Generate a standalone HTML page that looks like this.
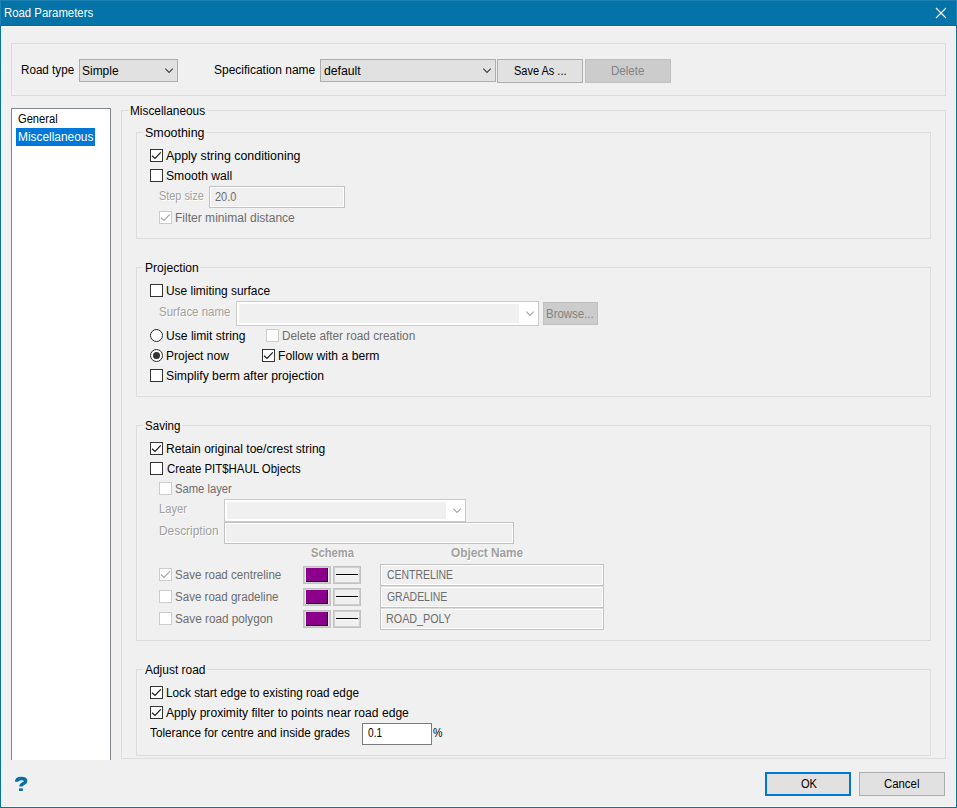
<!DOCTYPE html>
<html><head><meta charset="utf-8"><title>Road Parameters</title>
<style>
html,body{margin:0;padding:0;background:#f0f0f0;width:957px;height:808px;overflow:hidden}
body{position:relative;font-family:"Liberation Sans",sans-serif;font-size:12px}
div,span,svg{position:absolute;display:block}
span{white-space:pre;line-height:14px;transform-origin:0 0}
</style></head><body>
<div style="left:0px;top:0px;width:957px;height:808px;background:#0473a7"></div>
<div style="left:1px;top:26px;width:955px;height:781px;background:#fcf8f4"></div>
<div style="left:2px;top:27px;width:953px;height:779px;background:#f0f0f0"></div>
<div style="left:0px;top:25px;width:957px;height:1px;background:#0069a0"></div>
<div style="left:0px;top:0px;width:957px;height:1px;background:#1e81b3"></div>
<div style="left:0px;top:0px;width:1px;height:25px;background:#1e81b3"></div>
<div style="left:956px;top:0px;width:1px;height:25px;background:#1e81b3"></div>
<svg style="left:935px;top:7px" width="12" height="12" viewBox="0 0 12 12"><path d="M1 1L11 11M11 1L1 11" stroke="#fff" stroke-width="1.1" fill="none"/></svg>
<div style="left:11px;top:43px;width:935px;height:53px;border:1px solid #dcdcdc;box-sizing:border-box"></div>
<div style="left:11px;top:108px;width:100px;height:652px;background:#fff;border:1px solid #828790;border-bottom:none;box-sizing:border-box"></div>
<div style="left:16px;top:128px;width:79px;height:18px;background:#0078d7"></div>
<div style="left:121px;top:110px;width:825px;height:649px;border:1px solid #dcdcdc;box-sizing:border-box"></div>
<div style="left:128px;top:109px;width:78.5px;height:3px;background:#f0f0f0"></div>
<div style="left:136px;top:132px;width:795px;height:107px;border:1px solid #dcdcdc;box-sizing:border-box"></div>
<div style="left:143px;top:131px;width:62.5px;height:3px;background:#f0f0f0"></div>
<div style="left:136px;top:267px;width:795px;height:130px;border:1px solid #dcdcdc;box-sizing:border-box"></div>
<div style="left:143px;top:266px;width:56.5px;height:3px;background:#f0f0f0"></div>
<div style="left:136px;top:425px;width:795px;height:216px;border:1px solid #dcdcdc;box-sizing:border-box"></div>
<div style="left:143px;top:424px;width:38.5px;height:3px;background:#f0f0f0"></div>
<div style="left:136px;top:669px;width:795px;height:87px;border:1px solid #dcdcdc;box-sizing:border-box"></div>
<div style="left:143px;top:668px;width:63.5px;height:3px;background:#f0f0f0"></div>
<div style="left:79px;top:59px;width:99px;height:23px;background:#e1e1e1;border:1px solid #adadad;box-sizing:border-box"></div>
<svg style="left:164px;top:68.25px" width="10" height="6" viewBox="0 0 10 6"><path d="M1.3 0.6L5.05 4.5L8.8 0.6" stroke="#404040" stroke-width="1.12" fill="none"/></svg>
<div style="left:320px;top:59px;width:176px;height:23px;background:#e1e1e1;border:1px solid #adadad;box-sizing:border-box"></div>
<svg style="left:482px;top:68.25px" width="10" height="6" viewBox="0 0 10 6"><path d="M1.3 0.6L5.05 4.5L8.8 0.6" stroke="#404040" stroke-width="1.12" fill="none"/></svg>
<div style="left:497px;top:59px;width:86px;height:24px;background:#e1e1e1;border:1px solid #adadad;box-sizing:border-box"></div>
<div style="left:585px;top:59px;width:86px;height:24px;background:#cccccc;border:1px solid #bfbfbf;box-sizing:border-box"></div>
<div style="left:150px;top:149px;width:13px;height:13px;background:#fff;border:1px solid #333333;box-sizing:border-box"></div>
<svg style="left:150px;top:149px" width="13" height="13" viewBox="0 0 13 13"><path d="M2.0 6.7L5.0 9.4L10.8 3.3" stroke="#1a1a1a" stroke-width="1.2" fill="none"/></svg>
<div style="left:150px;top:169px;width:13px;height:13px;background:#fff;border:1px solid #333333;box-sizing:border-box"></div>
<div style="left:209px;top:186px;width:136px;height:22px;background:#f0f0f0;border:1px solid #c2c2c2;box-shadow:inset 0 0 0 1px #fff;box-sizing:border-box"></div>
<div style="left:159px;top:211px;width:13px;height:13px;background:#fff;border:1px solid #cccccc;box-sizing:border-box"></div>
<svg style="left:159px;top:211px" width="13" height="13" viewBox="0 0 13 13"><path d="M2.0 6.7L5.0 9.4L10.8 3.3" stroke="#a8a8a8" stroke-width="1.2" fill="none"/></svg>
<div style="left:150px;top:284px;width:13px;height:13px;background:#fff;border:1px solid #333333;box-sizing:border-box"></div>
<div style="left:236px;top:301px;width:303px;height:25px;background:#fff;border:1px solid #cacaca;box-sizing:border-box"></div>
<div style="left:239px;top:304px;width:280px;height:19px;background:#f0f0f0"></div>
<svg style="left:525px;top:311.25px" width="10" height="6" viewBox="0 0 10 6"><path d="M1.3 0.6L5.05 4.5L8.8 0.6" stroke="#a6a6a6" stroke-width="1.1" fill="none"/></svg>
<div style="left:543px;top:302px;width:55px;height:23px;background:#cccccc;border:1px solid #bfbfbf;box-sizing:border-box"></div>
<div style="left:150px;top:329px;width:13px;height:13px;background:#fff;border:1px solid #2a2a2a;border-radius:50%;box-sizing:border-box"></div>
<div style="left:266px;top:329px;width:13px;height:13px;background:#fff;border:1px solid #cccccc;box-sizing:border-box"></div>
<div style="left:150px;top:349px;width:13px;height:13px;background:#fff;border:1px solid #2a2a2a;border-radius:50%;box-sizing:border-box"></div>
<div style="left:153px;top:352px;width:7px;height:7px;background:#333;border-radius:50%"></div>
<div style="left:262px;top:349px;width:13px;height:13px;background:#fff;border:1px solid #333333;box-sizing:border-box"></div>
<svg style="left:262px;top:349px" width="13" height="13" viewBox="0 0 13 13"><path d="M2.0 6.7L5.0 9.4L10.8 3.3" stroke="#1a1a1a" stroke-width="1.2" fill="none"/></svg>
<div style="left:150px;top:369px;width:13px;height:13px;background:#fff;border:1px solid #333333;box-sizing:border-box"></div>
<div style="left:150px;top:442px;width:13px;height:13px;background:#fff;border:1px solid #333333;box-sizing:border-box"></div>
<svg style="left:150px;top:442px" width="13" height="13" viewBox="0 0 13 13"><path d="M2.0 6.7L5.0 9.4L10.8 3.3" stroke="#1a1a1a" stroke-width="1.2" fill="none"/></svg>
<div style="left:150px;top:462px;width:13px;height:13px;background:#fff;border:1px solid #333333;box-sizing:border-box"></div>
<div style="left:159px;top:482px;width:13px;height:13px;background:#fff;border:1px solid #cccccc;box-sizing:border-box"></div>
<div style="left:224px;top:499px;width:242px;height:23px;background:#fff;border:1px solid #cacaca;box-sizing:border-box"></div>
<div style="left:227px;top:502px;width:219px;height:17px;background:#f0f0f0"></div>
<svg style="left:452px;top:508.25px" width="10" height="6" viewBox="0 0 10 6"><path d="M1.3 0.6L5.05 4.5L8.8 0.6" stroke="#a6a6a6" stroke-width="1.1" fill="none"/></svg>
<div style="left:224px;top:522px;width:290px;height:22px;background:#f0f0f0;border:1px solid #c2c2c2;box-shadow:inset 0 0 0 1px #fff;box-sizing:border-box"></div>
<div style="left:159px;top:568px;width:13px;height:13px;background:#fff;border:1px solid #cccccc;box-sizing:border-box"></div>
<svg style="left:159px;top:568px" width="13" height="13" viewBox="0 0 13 13"><path d="M2.0 6.7L5.0 9.4L10.8 3.3" stroke="#a8a8a8" stroke-width="1.2" fill="none"/></svg>
<div style="left:303px;top:566px;width:28px;height:18px;background:#f0f0f0;border:1px solid #c2c2c2;box-shadow:inset 0 0 0 1px #cecece;box-sizing:border-box"></div>
<div style="left:306px;top:568px;width:22px;height:14px;background:#8b008b;border-right:1px solid #000;border-bottom:1px solid #000;box-sizing:border-box"></div>
<div style="left:333px;top:566px;width:28px;height:18px;background:#f0f0f0;border:1px solid #c2c2c2;box-shadow:inset 0 0 0 1px #cecece;box-sizing:border-box"></div>
<div style="left:336px;top:574px;width:22px;height:1px;background:#000"></div>
<div style="left:336px;top:575px;width:22px;height:1px;background:#fafafa"></div>
<div style="left:380px;top:564px;width:224px;height:22px;background:#f0f0f0;border:1px solid #c2c2c2;box-shadow:inset 0 0 0 1px #fff;box-sizing:border-box"></div>
<div style="left:159px;top:590px;width:13px;height:13px;background:#fff;border:1px solid #cccccc;box-sizing:border-box"></div>
<div style="left:303px;top:588px;width:28px;height:18px;background:#f0f0f0;border:1px solid #c2c2c2;box-shadow:inset 0 0 0 1px #cecece;box-sizing:border-box"></div>
<div style="left:306px;top:590px;width:22px;height:14px;background:#8b008b;border-right:1px solid #000;border-bottom:1px solid #000;box-sizing:border-box"></div>
<div style="left:333px;top:588px;width:28px;height:18px;background:#f0f0f0;border:1px solid #c2c2c2;box-shadow:inset 0 0 0 1px #cecece;box-sizing:border-box"></div>
<div style="left:336px;top:596px;width:22px;height:1px;background:#000"></div>
<div style="left:336px;top:597px;width:22px;height:1px;background:#fafafa"></div>
<div style="left:380px;top:586px;width:224px;height:22px;background:#f0f0f0;border:1px solid #c2c2c2;border-top-color:#dcdcdc;box-shadow:inset 0 0 0 1px #fff;box-sizing:border-box"></div>
<div style="left:159px;top:612px;width:13px;height:13px;background:#fff;border:1px solid #cccccc;box-sizing:border-box"></div>
<div style="left:303px;top:610px;width:28px;height:18px;background:#f0f0f0;border:1px solid #c2c2c2;box-shadow:inset 0 0 0 1px #cecece;box-sizing:border-box"></div>
<div style="left:306px;top:612px;width:22px;height:14px;background:#8b008b;border-right:1px solid #000;border-bottom:1px solid #000;box-sizing:border-box"></div>
<div style="left:333px;top:610px;width:28px;height:18px;background:#f0f0f0;border:1px solid #c2c2c2;box-shadow:inset 0 0 0 1px #cecece;box-sizing:border-box"></div>
<div style="left:336px;top:618px;width:22px;height:1px;background:#000"></div>
<div style="left:336px;top:619px;width:22px;height:1px;background:#fafafa"></div>
<div style="left:380px;top:608px;width:224px;height:22px;background:#f0f0f0;border:1px solid #c2c2c2;border-top-color:#dcdcdc;box-shadow:inset 0 0 0 1px #fff;box-sizing:border-box"></div>
<div style="left:150px;top:686px;width:13px;height:13px;background:#fff;border:1px solid #333333;box-sizing:border-box"></div>
<svg style="left:150px;top:686px" width="13" height="13" viewBox="0 0 13 13"><path d="M2.0 6.7L5.0 9.4L10.8 3.3" stroke="#1a1a1a" stroke-width="1.2" fill="none"/></svg>
<div style="left:150px;top:706px;width:13px;height:13px;background:#fff;border:1px solid #333333;box-sizing:border-box"></div>
<svg style="left:150px;top:706px" width="13" height="13" viewBox="0 0 13 13"><path d="M2.0 6.7L5.0 9.4L10.8 3.3" stroke="#1a1a1a" stroke-width="1.2" fill="none"/></svg>
<div style="left:362px;top:723px;width:70px;height:22px;background:#fff;border:1px solid #7a7a7a;box-sizing:border-box"></div>
<div style="left:765px;top:772px;width:86px;height:24px;background:#e1e1e1;border:2px solid #0078d7;box-sizing:border-box"></div>
<div style="left:859px;top:772px;width:86px;height:24px;background:#e1e1e1;border:1px solid #adadad;box-sizing:border-box"></div>
<svg style="left:14px;top:776px" width="15" height="16" viewBox="-0.9 -0.9 15 16"><path d="M1.7 4.9C1.8 2.5 3.9 1.6 6.2 1.6C9 1.6 10.8 2.6 10.8 4.3C10.8 6.5 6 6.6 6 9.5" stroke="#0a6ea5" stroke-width="3.4" fill="none"/><rect x="4.1" y="11.5" width="3.9" height="2.6" fill="#0a6ea5"/></svg>
<span style="left:3.90px;top:6px;color:#ffffff;font-weight:400;font-size:12px;transform:scaleX(0.9479)">Road Parameters</span>
<span style="left:20.57px;top:63px;color:#000000;font-weight:400;font-size:12px;transform:scaleX(0.9708)">Road type</span>
<span style="left:82.42px;top:64px;color:#000000;font-weight:400;font-size:12px;transform:scaleX(0.9960)">Simple</span>
<span style="left:213.72px;top:63px;color:#000000;font-weight:400;font-size:12px;transform:scaleX(0.9985)">Specification name</span>
<span style="left:324.41px;top:64px;color:#000000;font-weight:400;font-size:12px;transform:scaleX(1.0188)">default</span>
<span style="left:513.61px;top:64px;color:#000000;font-weight:400;font-size:12px;transform:scaleX(0.9157)">Save As ...</span>
<span style="left:610.68px;top:64px;color:#838383;font-weight:400;font-size:12px;transform:scaleX(0.9623)">Delete</span>
<span style="left:18.39px;top:112px;color:#000000;font-weight:400;font-size:12px;transform:scaleX(0.9290)">General</span>
<span style="left:17.65px;top:130px;color:#ffffff;font-weight:400;font-size:12px;transform:scaleX(0.9916)">Miscellaneous</span>
<span style="left:129.75px;top:104px;color:#000000;font-weight:400;font-size:12px;transform:scaleX(0.9876)">Miscellaneous</span>
<span style="left:144.68px;top:126px;color:#000000;font-weight:400;font-size:12px;transform:scaleX(1.0367)">Smoothing</span>
<span style="left:166.33px;top:149px;color:#000000;font-weight:400;font-size:12px;transform:scaleX(1.0335)">Apply string conditioning</span>
<span style="left:165.91px;top:169px;color:#000000;font-weight:400;font-size:12px;transform:scaleX(1.0134)">Smooth wall</span>
<span style="left:158.72px;top:189px;text-shadow:1px 1px 0 #fff;color:#a0a0a0;font-weight:400;font-size:12px;transform:scaleX(0.9070)">Step size</span>
<span style="left:214.80px;top:190px;color:#6d6d6d;font-weight:400;font-size:12px;transform:scaleX(0.9174)">20.0</span>
<span style="left:175.44px;top:211px;color:#6d6d6d;font-weight:400;font-size:12px;transform:scaleX(1.0036)">Filter minimal distance</span>
<span style="left:144.73px;top:261px;color:#000000;font-weight:400;font-size:12px;transform:scaleX(1.0082)">Projection</span>
<span style="left:165.81px;top:284px;color:#000000;font-weight:400;font-size:12px;transform:scaleX(0.9940)">Use limiting surface</span>
<span style="left:158.87px;top:305px;text-shadow:1px 1px 0 #fff;color:#a0a0a0;font-weight:400;font-size:12px;transform:scaleX(0.9545)">Surface name</span>
<span style="left:546.49px;top:307px;color:#838383;font-weight:400;font-size:12px;transform:scaleX(0.9531)">Browse...</span>
<span style="left:165.79px;top:329px;color:#000000;font-weight:400;font-size:12px;transform:scaleX(1.0089)">Use limit string</span>
<span style="left:281.76px;top:329px;color:#6d6d6d;font-weight:400;font-size:12px;transform:scaleX(0.9837)">Delete after road creation</span>
<span style="left:165.84px;top:349px;color:#000000;font-weight:400;font-size:12px;transform:scaleX(1.0024)">Project now</span>
<span style="left:277.63px;top:349px;color:#000000;font-weight:400;font-size:12px;transform:scaleX(1.0132)">Follow with a berm</span>
<span style="left:165.80px;top:369px;color:#000000;font-weight:400;font-size:12px;transform:scaleX(1.0172)">Simplify berm after projection</span>
<span style="left:144.76px;top:419px;color:#000000;font-weight:400;font-size:12px;transform:scaleX(0.9645)">Saving</span>
<span style="left:165.84px;top:442px;color:#000000;font-weight:400;font-size:12px;transform:scaleX(1.0035)">Retain original toe/crest string</span>
<span style="left:166.59px;top:462px;color:#000000;font-weight:400;font-size:12px;transform:scaleX(0.9524)">Create PIT$HAUL Objects</span>
<span style="left:174.79px;top:482px;color:#6d6d6d;font-weight:400;font-size:12px;transform:scaleX(0.9343)">Same layer</span>
<span style="left:158.91px;top:502px;text-shadow:1px 1px 0 #fff;color:#a0a0a0;font-weight:400;font-size:12px;transform:scaleX(0.9334)">Layer</span>
<span style="left:158.85px;top:524px;text-shadow:1px 1px 0 #fff;color:#a0a0a0;font-weight:400;font-size:12px;transform:scaleX(0.9918)">Description</span>
<span style="left:310.56px;top:546px;text-shadow:1px 1px 0 #fff;color:#a0a0a0;font-weight:700;font-size:12px;transform:scaleX(0.9365)">Schema</span>
<span style="left:450.64px;top:546px;text-shadow:1px 1px 0 #fff;color:#a0a0a0;font-weight:700;font-size:12px;transform:scaleX(0.9838)">Object Name</span>
<span style="left:174.76px;top:568px;color:#6d6d6d;font-weight:400;font-size:12px;transform:scaleX(0.9655)">Save road centreline</span>
<span style="left:174.76px;top:590px;color:#6d6d6d;font-weight:400;font-size:12px;transform:scaleX(0.9636)">Save road gradeline</span>
<span style="left:174.74px;top:612px;color:#6d6d6d;font-weight:400;font-size:12px;transform:scaleX(0.9771)">Save road polygon</span>
<span style="left:386.61px;top:568px;color:#6d6d6d;font-weight:400;font-size:12px;transform:scaleX(0.8693)">CENTRELINE</span>
<span style="left:386.61px;top:590px;color:#6d6d6d;font-weight:400;font-size:12px;transform:scaleX(0.8693)">GRADELINE</span>
<span style="left:385.95px;top:612px;color:#6d6d6d;font-weight:400;font-size:12px;transform:scaleX(0.8964)">ROAD_POLY</span>
<span style="left:145.14px;top:663px;color:#000000;font-weight:400;font-size:12px;transform:scaleX(0.9958)">Adjust road</span>
<span style="left:165.96px;top:686px;color:#000000;font-weight:400;font-size:12px;transform:scaleX(0.9807)">Lock start edge to existing road edge</span>
<span style="left:166.34px;top:706px;color:#000000;font-weight:400;font-size:12px;transform:scaleX(1.0085)">Apply proximity filter to points near road edge</span>
<span style="left:150.14px;top:726px;color:#000000;font-weight:400;font-size:12px;transform:scaleX(0.9797)">Tolerance for centre and inside grades</span>
<span style="left:368.28px;top:726px;color:#000000;font-weight:400;font-size:12px;transform:scaleX(0.8437)">0.1</span>
<span style="left:433.07px;top:726px;color:#000000;font-weight:400;font-size:12px;transform:scaleX(0.8853)">%</span>
<span style="left:800.52px;top:777px;color:#000000;font-weight:400;font-size:12px;transform:scaleX(0.9238)">OK</span>
<span style="left:884.49px;top:777px;color:#000000;font-weight:400;font-size:12px;transform:scaleX(0.9481)">Cancel</span>
</body></html>
